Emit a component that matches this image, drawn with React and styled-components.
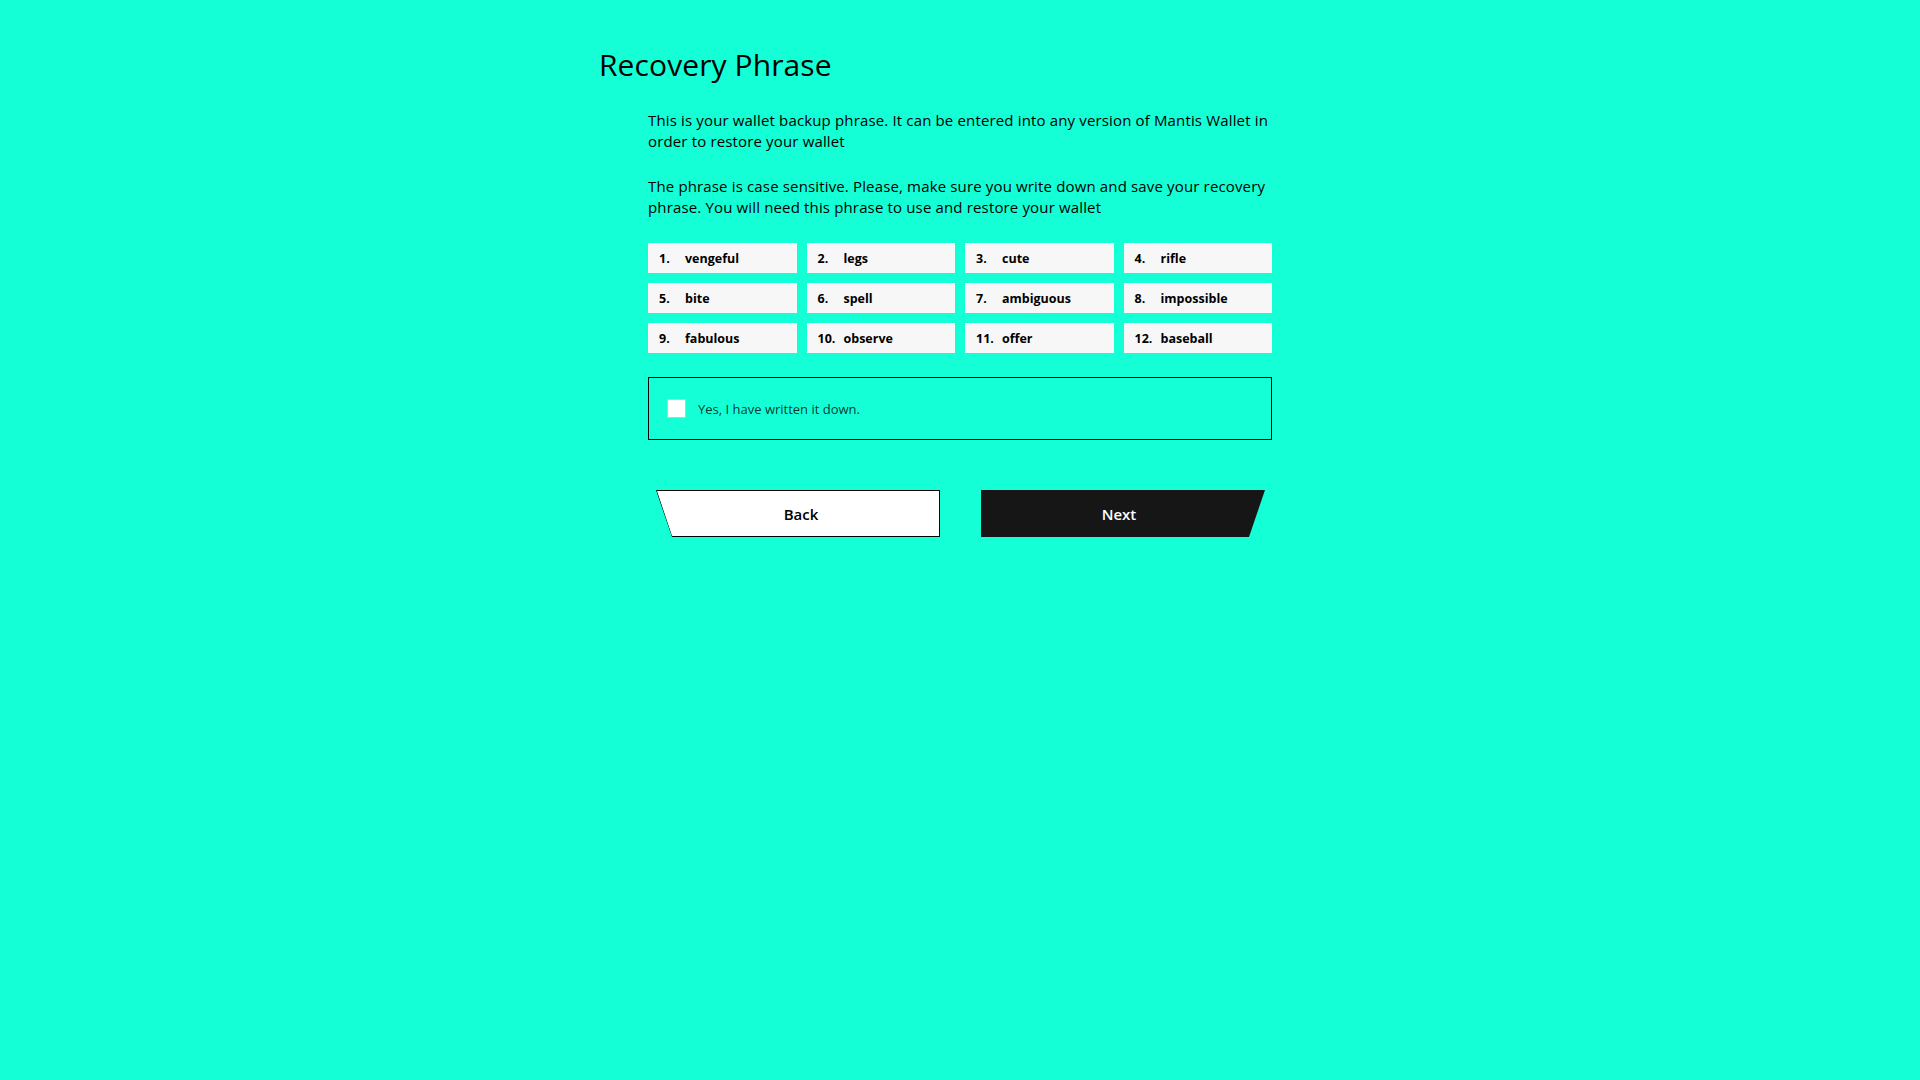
import React, { useState } from 'react';
import styled, { createGlobalStyle } from 'styled-components';

const GlobalStyle = createGlobalStyle`
    html, body {
        margin: 0;
        padding: 0;
        background-color: #14ffd6;
        font-family: 'Open Sans', 'Liberation Sans', sans-serif;
        color: #000;
    }
`;

const Page = styled.div`
    display: flex;
    justify-content: center;
    min-height: 100vh;
    background-color: #14ffd6;
`;

const Wrapper = styled.div`
    width: 722px;
    padding-top: 50px;
`;

const Title = styled.h1`
    margin: 0;
    font-size: 30px;
    line-height: 30px;
    font-weight: 500;
    letter-spacing: 0.1px;
`;

const Content = styled.div`
    padding: 30px 49px 0;
`;

const Text = styled.p`
    margin: 0 0 24px;
    font-size: 15px;
    line-height: 21px;
    font-weight: 400;
    letter-spacing: 0.15px;
`;

const WordGrid = styled.div`
    display: grid;
    grid-template-columns: repeat(4, 1fr);
    gap: 10px;
    margin-top: 25px;
`;

const WordCell = styled.div`
    display: flex;
    align-items: center;
    height: 30px;
    padding: 0 11px;
    background-color: #f7f7f7;
    font-size: 12.5px;
    font-weight: 700;
`;

const WordIndex = styled.span`
    width: 26px;
    flex-shrink: 0;
`;

const ConfirmBox = styled.label`
    display: flex;
    align-items: center;
    gap: 12px;
    height: 63px;
    box-sizing: border-box;
    margin-top: 24px;
    padding-left: 18px;
    border: 1px solid #000;
    cursor: pointer;
`;

const Checkbox = styled.span`
    display: inline-flex;
    align-items: center;
    justify-content: center;
    width: 17px;
    height: 17px;
    background-color: #fff;
    border: 1px solid #7dff6e;
    font-size: 13px;
    line-height: 1;
`;

const ConfirmText = styled.span`
    font-size: 13px;
    color: rgba(0, 0, 0, 0.8);
`;

const ButtonRow = styled.div`
    display: flex;
    justify-content: space-between;
    margin-top: 50px;
    padding: 0 7px 0 8px;
`;

const BackOuter = styled.button`
    width: 284px;
    height: 47px;
    padding: 1px;
    border: none;
    background-color: #000;
    clip-path: polygon(0 0, 100% 0, 100% 100%, 16px 100%);
    cursor: pointer;
    font-family: inherit;
`;

const BackInner = styled.span`
    display: flex;
    align-items: center;
    justify-content: center;
    height: 100%;
    padding-left: 6px;
    background-color: #fff;
    clip-path: polygon(0 0, 100% 0, 100% 100%, 15px 100%);
    font-size: 15px;
    font-weight: 600;
    color: #000;
`;

const NextButton = styled.button`
    display: flex;
    align-items: center;
    justify-content: center;
    width: 284px;
    height: 47px;
    padding: 0 8px 0 0;
    border: none;
    background-color: #161616;
    clip-path: polygon(0 0, 100% 0, calc(100% - 16px) 100%, 0 100%);
    color: #fff;
    font-family: inherit;
    font-size: 15px;
    font-weight: 600;
    cursor: pointer;
`;

const words = [
    'vengeful',
    'legs',
    'cute',
    'rifle',
    'bite',
    'spell',
    'ambiguous',
    'impossible',
    'fabulous',
    'observe',
    'offer',
    'baseball',
];

const App = () => {
    const [confirmed, setConfirmed] = useState(false);

    return (
        <Page>
            <GlobalStyle />
            <Wrapper>
                <Title>Recovery Phrase</Title>
                <Content>
                    <Text>
                        This is your wallet backup phrase. It can be entered into any version of Mantis Wallet in
                        order to restore your wallet
                    </Text>
                    <Text>
                        The phrase is case sensitive. Please, make sure you write down and save your recovery
                        phrase. You will need this phrase to use and restore your wallet
                    </Text>

                    <WordGrid>
                        {words.map((word, i) => (
                            <WordCell key={word}>
                                <WordIndex>{i + 1}.</WordIndex>
                                {word}
                            </WordCell>
                        ))}
                    </WordGrid>

                    <ConfirmBox onClick={() => setConfirmed(!confirmed)}>
                        <Checkbox>{confirmed ? '✓' : ''}</Checkbox>
                        <ConfirmText>Yes, I have written it down.</ConfirmText>
                    </ConfirmBox>

                    <ButtonRow>
                        <BackOuter>
                            <BackInner>Back</BackInner>
                        </BackOuter>
                        <NextButton disabled={!confirmed}>Next</NextButton>
                    </ButtonRow>
                </Content>
            </Wrapper>
        </Page>
    );
};

export default App;
